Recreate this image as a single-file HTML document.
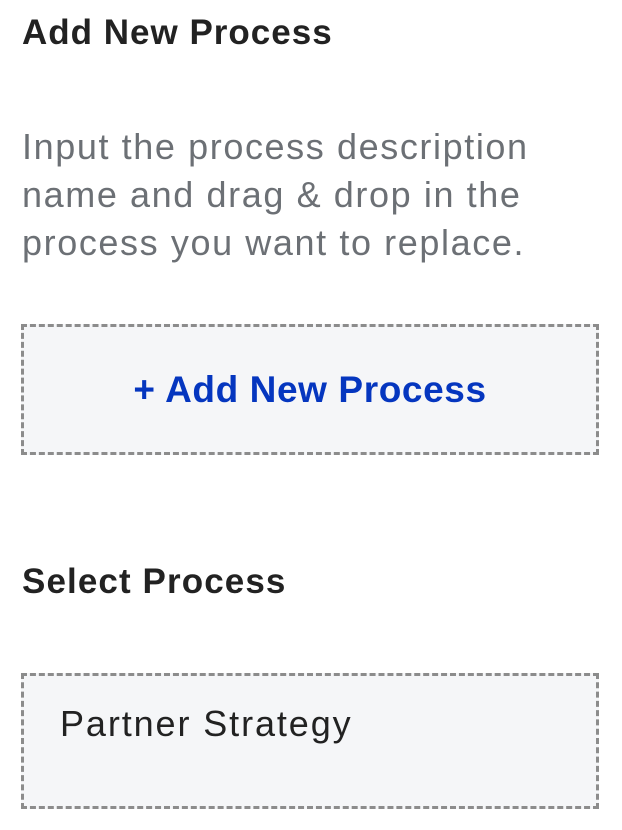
<!DOCTYPE html>
<html><head><style>
body{margin:0;width:622px;height:830px;background:#fff;font-family:"Liberation Sans",Arial,sans-serif;position:relative;overflow:hidden}
.h{position:absolute;left:22px;font-weight:bold;font-size:35px;color:#222;letter-spacing:1px}
.p{position:absolute;left:22px;top:123px;font-size:36px;line-height:48px;color:#6c7075;letter-spacing:1.6px}
.box{position:absolute;left:21px;width:572px;border:3px dashed #8c8c8c;background:#f5f6f8}
</style></head><body>
<div class="h" style="top:13px">Add New Process</div>
<div class="p">Input the process description<br>name and drag &amp; drop in the<br>process you want to replace.</div>
<div class="box" style="top:324px;height:125px">
<div style="text-align:center;font-weight:bold;font-size:37px;color:#0536bf;margin-top:42px;letter-spacing:0.6px">+ Add New Process</div>
</div>
<div class="h" style="top:562px;letter-spacing:1.1px">Select Process</div>
<div class="box" style="top:673px;height:130px">
<div style="position:absolute;left:36px;top:27px;font-size:36px;color:#222;letter-spacing:1.9px">Partner Strategy</div>
</div>
</body></html>
